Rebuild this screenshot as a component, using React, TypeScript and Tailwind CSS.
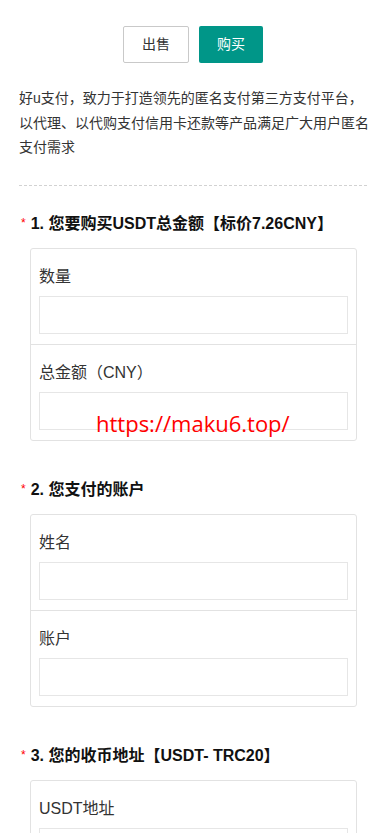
import React from 'react';

interface Field {
  label: string;
}

interface Section {
  title: string;
  fields: Field[];
}

const sections: Section[] = [
  {
    title: '1. 您要购买USDT总金额【标价7.26CNY】',
    fields: [{ label: '数量' }, { label: '总金额（CNY）' }],
  },
  {
    title: '2. 您支付的账户',
    fields: [{ label: '姓名' }, { label: '账户' }],
  },
  {
    title: '3. 您的收币地址【USDT- TRC20】',
    fields: [{ label: 'USDT地址' }],
  },
];

export default function App() {
  return (
    <div
      className="relative min-h-[833px] bg-white text-[#333]"
      style={{ fontFamily: '"Liberation Sans", "Noto Sans CJK SC", sans-serif' }}
    >
      {/* Tabs */}
      <div className="flex justify-center gap-[10px] pt-[26px]">
        <button className="h-[37px] w-[66px] rounded-[2px] border border-[#c9c9c9] bg-white text-[14px] text-[#333]">
          出售
        </button>
        <button className="h-[37px] w-[64px] rounded-[2px] bg-[#009688] text-[14px] text-white">
          购买
        </button>
      </div>

      {/* Intro */}
      <p className="mt-[23px] pl-[19px] pr-[15px] text-[14px] leading-[24.5px] text-[#333]">
        好u支付，致力于打造领先的匿名支付第三方支付平台，以代理、以代购支付信用卡还款等产品满足广大用户匿名支付需求
      </p>

      <div className="mx-[19px] mt-[25px] border-t border-dashed border-[#d2d2d2]" />

      {/* Form */}
      <div className="pt-[26px]">
        {sections.map((section, i) => (
          <div key={section.title} className={i > 0 ? 'mt-[37px]' : ''}>
            <div className="flex items-start pl-[21px] leading-[24px]">
              <span className="mr-[5px] mt-[-1px] text-[12px] text-[#ff0000]">*</span>
              <span className="text-[16px] font-bold text-[#111]">{section.title}</span>
            </div>
            <div className="ml-[30px] mr-[29px] mt-[12px] rounded-[3px] border border-[#e2e2e2]">
              {section.fields.map((field, j) => (
                <div
                  key={field.label}
                  className={`px-[8px] pb-[10px] pt-[18px] ${j > 0 ? 'border-t border-[#e2e2e2]' : ''}`}
                >
                  <div className="text-[16px] leading-[20px] text-[#333]">{field.label}</div>
                  <input
                    type="text"
                    className="mt-[9px] block h-[38px] w-full border border-[#e6e6e6] bg-white px-[10px] text-[14px] outline-none"
                  />
                </div>
              ))}
            </div>
          </div>
        ))}
      </div>

      {/* Watermark */}
      <div
        className="pointer-events-none absolute left-[96px] top-[407px] text-[22px] leading-[32px] text-[#ff0000]"
        style={{ fontFamily: '"Open Sans", sans-serif' }}
      >
        https://maku6.top/
      </div>
    </div>
  );
}
